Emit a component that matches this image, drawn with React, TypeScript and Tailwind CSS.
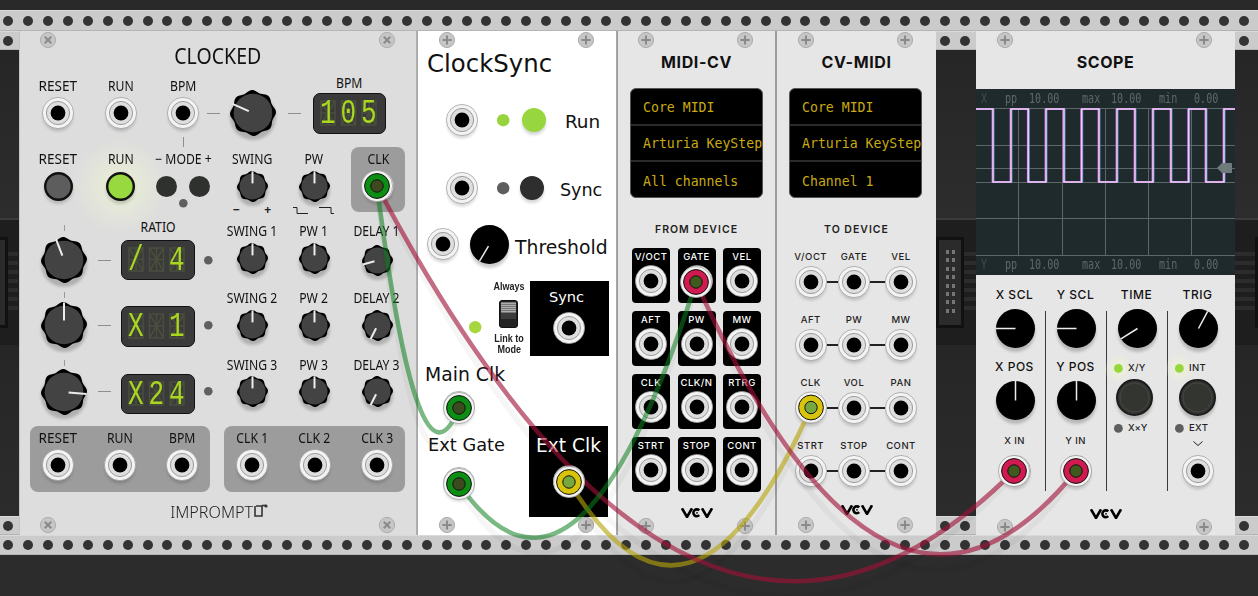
import { ReactNode } from "react";

function Rail({ className = "" }: { className?: string }) {
  return (
    <div className={"flex items-center shrink-0 overflow-hidden bg-[#cbcbcb] border-t border-t-[#d9d9d9] border-b border-b-[#b4b4b4] " + className}>
      <div className="flex -ml-[2px]">
        {Array.from({ length: 64 }).map((_, i) => (
          <div key={i} className="w-[19.95px] shrink-0 flex justify-center">
            <div className="w-[10px] h-[10px] rounded-full bg-[#333333]" />
          </div>
        ))}
      </div>
    </div>
  );
}

function Art({ r, className = "", children }: { r: number; className?: string; children: ReactNode }) {
  return (
    <svg width={2 * r} height={2 * r} viewBox={`${-r} ${-r} ${2 * r} ${2 * r}`} className={"block shrink-0 overflow-visible " + className}>
      {children}
    </svg>
  );
}
function Jack({ className = "" }: { className?: string }) {
  return (
    <Art r={16} className={className}>
      <circle cy={3.5} r={15} fill="#000" opacity={0.16} filter="url(#blur2)" />
      <circle r={15.6} fill="#f3f3f3" stroke="#999" strokeWidth={0.7} />
      <circle r={11.6} fill="#dedede" stroke="#888" strokeWidth={0.8} />
      <circle r={7.4} fill="#000" />
    </Art>
  );
}
function Knob({ r, a, className = "" }: { r: number; a: number; className?: string }) {
  const pts: string[] = [];
  for (let i = 0; i < 96; i++) {
    const t = (i / 96) * Math.PI * 2;
    const R = r * (0.95 + 0.05 * Math.cos(8 * t + Math.PI / 8));
    pts.push(`${(R * Math.sin(t)).toFixed(2)},${(-R * Math.cos(t)).toFixed(2)}`);
  }
  const s = Math.sin((a * Math.PI) / 180);
  const c = -Math.cos((a * Math.PI) / 180);
  return (
    <Art r={r} className={className}>
      <circle cy={4} r={r} fill="#000" opacity={0.2} filter="url(#blur2)" />
      <polygon points={pts.join(" ")} fill="#000" />
      <circle r={r * 0.84} fill="#434343" />
      <line x1={s * r * 0.98} y1={c * r * 0.98} x2={s * r * 0.2} y2={c * r * 0.2} stroke="#ececec" strokeWidth={2} />
    </Art>
  );
}
function PlainKnob({ a, inner = 0, className = "" }: { a: number; inner?: number; className?: string }) {
  const r = 19.5;
  const s = Math.sin((a * Math.PI) / 180);
  const c = -Math.cos((a * Math.PI) / 180);
  return (
    <Art r={r} className={className}>
      <circle cy={4} r={r} fill="#000" opacity={0.2} filter="url(#blur2)" />
      <circle r={r} fill="#000" />
      <line x1={s * r} y1={c * r} x2={s * inner} y2={c * inner} stroke="#ececec" strokeWidth={1.5} />
    </Art>
  );
}
function Led({ r, c, glow = false, shadow = false, stroke, className = "" }: { r: number; c: string; glow?: boolean; shadow?: boolean; stroke?: boolean; className?: string }) {
  return (
    <Art r={r} className={className}>
      {glow && <circle r={r * 3.4} fill="url(#glow)" />}
      {shadow && <circle cy={3} r={r} fill="#000" opacity={0.16} filter="url(#blur2)" />}
      <circle r={stroke ? r - 1.2 : r} fill={c} stroke={stroke ? "#111" : "none"} strokeWidth={stroke ? 2.4 : 0} />
    </Art>
  );
}
function Screw({ cross = false }: { cross?: boolean }) {
  return (
    <Art r={8}>
      <circle r={7.6} fill="#c6c6c6" stroke="#adadad" strokeWidth={1} />
      <g stroke="#8a8a8a" strokeWidth={2} transform={cross ? "rotate(45)" : undefined}>
        <line x1={-4.6} x2={4.6} />
        <line y1={-4.6} y2={4.6} />
      </g>
    </Art>
  );
}
function Screws({ className, cross = false }: { className: string; cross?: boolean }) {
  return (
    <div className={"flex justify-between shrink-0 " + className}>
      <Screw cross={cross} />
      <Screw cross={cross} />
    </div>
  );
}
function VcvLogo({ className = "" }: { className?: string }) {
  return (
    <svg width={32} height={10} viewBox="0 0 32 10" className={"block shrink-0 " + className} fill="none" stroke="#000" strokeWidth={2.6}>
      <polyline points="1,0.3 6,9 11,0.3" />
      <path d="M18.2 2.4 A3.4 3.4 0 1 0 18.2 7.2" />
      <circle cx={16} cy={4.8} r={0.9} fill="#000" stroke="none" />
      <polyline points="21,0.3 26,9 31,0.3" />
    </svg>
  );
}

function Seg({ w, h, text, className = "" }: { w: number; h: number; text: string; className?: string }) {
  return (
    <div className={"relative shrink-0 flex items-center pl-[6px] rounded-[7px] bg-[#3a3a3a] border border-[#111] overflow-hidden " + className} style={{ width: w, height: h }}>
      <svg width={w - 2} height={h - 2} className="absolute left-0 top-0" stroke="#4a4e3e" strokeWidth={1.5} fill="none">
        {[0, 1, 2].map((i) => {
          const l = 7 + i * 20.5;
          const t = 7;
          const cw = 14;
          const ch = h - 17;
          return (
            <g key={i}>
              <rect x={l} y={t} width={cw} height={ch} />
              <line x1={l} y1={t + ch / 2} x2={l + cw} y2={t + ch / 2} />
              <line x1={l + cw / 2} y1={t} x2={l + cw / 2} y2={t + ch} />
              <line x1={l} y1={t} x2={l + cw} y2={t + ch} />
              <line x1={l + cw} y1={t} x2={l} y2={t + ch} />
            </g>
          );
        })}
      </svg>
      <span className="relative font-['Liberation_Mono'] text-[26px] tracking-[4.9px] leading-[30px] text-[#a9d61e] whitespace-pre scale-y-[1.38]">{text}</span>
    </div>
  );
}

const lab = "font-['Noto_Sans'] text-[14px] leading-none whitespace-nowrap text-[#111] scale-x-[0.87]";
const labw = "font-['Noto_Sans'] text-[14px] leading-none whitespace-nowrap text-[#111] scale-x-[0.97]";
const line = "h-[1px] w-[13px] bg-[#8f8f8f]";

function S({ w, label, cls = lab, className = "", foot, children }: { w: number; label?: ReactNode; cls?: string; className?: string; foot?: ReactNode; children?: ReactNode }) {
  return (
    <div className={"flex flex-col items-center shrink-0 " + className} style={{ width: w }}>
      <div className={"h-[16px] flex items-center justify-center " + cls}>{label}</div>
      <div className="mt-[3px] h-[32px] w-full flex items-center justify-center">{children}</div>
      {foot}
    </div>
  );
}

function KnobRow({ tick, a, seg, swing, pw, delay, da, className, ratio, kn = "", dn = "" }: { tick: string; a: number; seg: ReactNode; swing: string; pw: string; delay: string; da: number; className: string; ratio?: string; kn?: string; dn?: string }) {
  return (
    <div className={"flex items-start ml-[21px] shrink-0 " + className}>
      <S w={46} label={<div className={"w-[1px] h-[6px] bg-[#8f8f8f] " + tick} />}><Knob r={23} a={a} className={kn} /></S>
      <S w={13} className="ml-[11px]"><div className={line + " " + kn} /></S>
      <S w={74} className="ml-[10px]" label={ratio} cls={lab + " -translate-y-[4px]"}>{seg}</S>
      <S w={9} className="ml-[9px]"><Led r={4.3} c="#5f5f5f" className={kn} /></S>
      <S w={50} className="ml-[14px]" label={swing}><Knob r={15.5} a={0} /></S>
      <S w={50} className="ml-[12px]" label={pw}><Knob r={15.5} a={0} /></S>
      <S w={50} className="ml-[13px]" label={delay}><Knob r={15.5} a={da} className={dn} /></S>
    </div>
  );
}

function Clocked() {
  const glyph = "font-['Noto_Sans'] font-bold text-[12px] leading-none text-[#222]";
  return (
    <div className="shrink-0 w-[398px] h-full flex flex-col bg-[#dddddd] bg-[radial-gradient(circle_48px_at_100px_155px,rgba(238,248,200,0.7),rgba(238,246,212,0.35)_55%,transparent)] border-l border-l-[#c4c4c4] border-r border-r-[#b0b0b0]">
      <Screws cross className="mt-[1px] ml-[20px] w-[355px]" />
      <div className="-mt-[3.5px] h-[24px] flex items-center justify-center shrink-0">
        <span className="font-['Noto_Sans'] text-[21px] leading-none text-[#111] scale-x-[0.93]">CLOCKED</span>
      </div>

      <div className="mt-[9.5px] ml-[7px] flex items-start shrink-0">
        <S w={62} label="RESET" cls={labw}><Jack /></S>
        <S w={63} label="RUN"><Jack /></S>
        <S w={38} label="BPM" className="ml-[12px]"><Jack /></S>
        <S w={13} className="ml-[5px]"><div className={line} /></S>
        <S w={46} className="ml-[10px]"><Knob r={23} a={-66} /></S>
        <S w={13} className="ml-[12px]"><div className={line} /></S>
        <S w={73} className="ml-[12px]" label="BPM" cls={lab + " -translate-y-[3px]"}><Seg w={73} h={41} text="105" /></S>
      </div>
      <div className="mt-[8px] h-[10px] w-[1px] ml-[163px] bg-[#8f8f8f] shrink-0" />

      <div className="ml-[7px] flex items-start shrink-0">
        <S w={62} className="pt-[4px]" label="RESET" cls={labw}><Led r={14.5} c="#5d5d5d" shadow stroke /></S>
        <S w={63} className="pt-[4px]" label="RUN"><Led r={14.5} c="#98d93f" shadow stroke /></S>
        <S w={62} className="pt-[4px]" label="− MODE +"
          foot={<Led r={4.3} c="#5f5f5f" className="-mt-[3px]" />}>
          <div className="flex gap-[11.5px]">
            <Led r={10.5} c="#2f312f" />
            <Led r={10.5} c="#2f312f" />
          </div>
        </S>
        <S w={50} className="pt-[4px] ml-[13px]" label="SWING"
          foot={<div className="mt-[3px] h-[10px] w-[38px] flex justify-between items-center"><span className={glyph}>−</span><span className={glyph}>+</span></div>}>
          <Knob r={15.5} a={0} />
        </S>
        <S w={50} className="pt-[4px] ml-[12px]" label="PW"
          foot={
            <svg width={44} height={10} className="block mt-[3px] shrink-0" fill="none" stroke="#222" strokeWidth={1}>
              <polyline points="1,2.5 5,2.5 5,8.5 16,8.5" />
              <polyline points="27,2.5 39,2.5 39,8.5 42,8.5" />
            </svg>
          }>
          <Knob r={15.5} a={0} />
        </S>
        <S w={54} className="pt-[4px] ml-[12px] h-[65px] rounded-[8px] bg-[#9c9c9c]" label="CLK"><Jack /></S>
      </div>

      <KnobRow className="mt-[8px]" tick="-translate-y-[3px]" a={-21} kn="translate-y-[2px]" ratio="RATIO"
        seg={<Seg w={74} h={40} text="/ 4" className="translate-y-[2px]" />}
        swing="SWING 1" pw="PW 1" delay="DELAY 1" da={-105} dn="translate-y-[2px]" />
      <KnobRow className="mt-[16px]" tick="-translate-y-[3px]" a={0}
        seg={<Seg w={74} h={41} text="X 1" className="translate-y-[1px]" />}
        swing="SWING 2" pw="PW 2" delay="DELAY 2" da={-153} />
      <KnobRow className="mt-[15.5px]" tick="-translate-y-[2px]" a={95}
        seg={<Seg w={74} h={40} text="X24" className="translate-y-[2px]" />}
        swing="SWING 3" pw="PW 3" delay="DELAY 3" da={-153} />

      <div className="mt-[18.5px] ml-[10px] flex gap-[14px] shrink-0">
        <div className="w-[180px] h-[66px] pt-[4px] px-[3px] flex justify-between rounded-[8px] bg-[#9c9c9c]">
          <S w={50} label="RESET" cls={labw}><Jack /></S>
          <S w={50} label="RUN"><Jack /></S>
          <S w={50} label="BPM"><Jack /></S>
        </div>
        <div className="w-[181px] h-[66px] pt-[4px] px-[3px] flex justify-between rounded-[8px] bg-[#9c9c9c]">
          <S w={50} label="CLK 1"><Jack /></S>
          <S w={50} label="CLK 2"><Jack /></S>
          <S w={50} label="CLK 3"><Jack /></S>
        </div>
      </div>

      <div className="mt-[13px] h-[12px] flex items-center justify-center shrink-0">
        <span className="font-['Noto_Sans'] text-[17px] leading-none font-light text-[#222] scale-x-[0.95]">IMPROMPT</span>
        <svg width={14} height={13} className="block -ml-[2px] -mt-[2px] shrink-0" fill="none" stroke="#333" strokeWidth={1.6}>
          <path d="M1 2 V12 H8 V2 H2" />
          <path d="M8 1.5 H12" />
          <circle cx={12} cy={2} r={1.6} fill="#333" stroke="none" />
        </svg>
      </div>
      <Screws cross className="mt-auto mb-[2px] ml-[20px] w-[355px]" />
    </div>
  );
}

const cs = "font-['DejaVu_Sans'] leading-none whitespace-nowrap text-[#111] pt-[2px]";
const small = "font-['Liberation_Sans'] font-bold text-[11px] leading-[11px] whitespace-nowrap text-[#222] scale-x-[0.82]";

function ClockSync() {
  return (
    <div className="shrink-0 w-[200px] h-full flex flex-col bg-white border-x border-x-[#a8a8a8]">
      <Screws className="mt-[1px] ml-[21px] w-[155px]" />
      <div className={"mt-[1px] ml-[9px] h-[30px] flex items-center text-[24.4px] " + cs}>ClockSync</div>

      <div className="mt-[26px] ml-[28px] h-[32px] flex items-center shrink-0">
        <Jack />
        <Led r={6.2} c="#97d43c" className="ml-[19px]" />
        <Led r={12} c="#98d640" shadow className="ml-[12.5px]" />
        <span className={"ml-[19px] mt-[2px] text-[18.4px] " + cs}>Run</span>
      </div>
      <div className="mt-[36px] ml-[28px] h-[32px] flex items-center shrink-0">
        <Jack />
        <Led r={6.2} c="#5e5e5e" className="ml-[19px]" />
        <Led r={12} c="#2e2e2e" shadow className="ml-[11px]" />
        <span className={"ml-[15.5px] mt-[4px] text-[17.6px] " + cs}>Sync</span>
      </div>
      <div className="mt-[24px] ml-[9px] h-[32px] flex items-center shrink-0">
        <Jack />
        <PlainKnob a={-149} inner={2} className="ml-[10.5px]" />
        <span className={"ml-[6.5px] mt-[6px] text-[18.8px] " + cs}>Threshold</span>
      </div>

      <div className="mt-[21px] h-[75px] flex items-start shrink-0">
        <Led r={6.2} c="#a7d63e" className="ml-[50.8px] mt-[39.8px]" />
        <div className="ml-[7.8px] w-[40px] flex flex-col items-center shrink-0">
          <span className={"h-[10px] " + small}>Always</span>
          <svg width={19} height={28} className="block mt-[9px] shrink-0">
            <rect x={0.5} y={0.5} width={18} height={27} rx={2.5} fill="#222" stroke="#111" />
            <rect x={2} y={2} width={15} height={11} fill="#777" />
            {[3.5, 5.5, 7.5, 9.5, 11.5].map((v) => <line key={v} x1={2} x2={17} y1={v} y2={v} stroke="#bbb" strokeWidth={0.8} />)}
            <rect x={2} y={13} width={15} height={6} fill="#3c3c3c" />
          </svg>
          <span className={"mt-[5px] h-[11px] " + small}>Link to</span>
          <span className={"h-[11px] " + small}>Mode</span>
        </div>
        <div className="ml-[1px] w-[79px] h-[75px] bg-black flex flex-col items-center shrink-0">
          <span className="mt-[8px] pr-[6px] h-[16px] flex items-center font-['DejaVu_Sans'] text-[14.6px] leading-none text-white">Sync</span>
          <Jack className="mt-[7px]" />
        </div>
      </div>

      <div className="mt-[8px] flex items-start shrink-0">
        <div className="w-[111px] flex flex-col shrink-0">
          <span className={"ml-[7px] h-[20px] flex items-center text-[18.8px] " + cs}>Main Clk</span>
          <Jack className="mt-[7px] ml-[25px]" />
          <span className={"mt-[11px] ml-[10px] h-[20px] flex items-center text-[17.8px] " + cs}>Ext Gate</span>
          <Jack className="mt-[13px] ml-[25px]" />
        </div>
        <div className="mt-[62px] w-[79px] h-[91px] bg-black flex flex-col items-center shrink-0">
          <span className="mt-[9px] h-[20px] pt-[2px] flex items-center font-['DejaVu_Sans'] text-[18.6px] leading-none text-white">Ext Clk</span>
          <Jack className="mt-[10px]" />
        </div>
      </div>
      <Screws className="mt-auto mb-[2px] ml-[21px] w-[155px]" />
    </div>
  );
}

const midiTitle = "font-['Inter'] font-bold text-[16px] tracking-[0.6px] leading-none text-[#111]";
const midiHead = "font-['Inter'] font-semibold text-[10.5px] tracking-[1px] leading-none text-[#222]";

function Title({ text, className }: { text: string; className: string }) {
  return <div className={"h-[20px] flex items-center justify-center shrink-0 " + className}><span className={midiTitle}>{text}</span></div>;
}

function MidiDisplay({ lines }: { lines: string[] }) {
  return (
    <div className="mt-[16px] ml-[12px] w-[133px] h-[110px] shrink-0 bg-black rounded-[6px] border border-[#555] overflow-hidden flex flex-col">
      {lines.map((l, i) => (
        <div key={l} className={"h-[36.5px] shrink-0 flex items-center pt-[3px] pl-[12px] whitespace-nowrap font-['DejaVu_Sans_Mono'] text-[13.2px] text-[#c9aa10] " + (i < 2 ? "border-b-2 border-b-[#2b2b2b]" : "")}>{l}</div>
      ))}
    </div>
  );
}

function MidiCv() {
  const labels = ["V/OCT", "GATE", "VEL", "AFT", "PW", "MW", "CLK", "CLK/N", "RTRG", "STRT", "STOP", "CONT"];
  return (
    <div className="shrink-0 w-[160px] h-full flex flex-col bg-[#e6e6e6] border-l border-l-[#9c9c9c] border-r-2 border-r-[#9c9c9c]">
      <Screws className="mt-[1px] ml-[20px] w-[115px]" />
      <Title text="MIDI-CV" className="mt-[4px]" />
      <MidiDisplay lines={["Core MIDI", "Arturia KeyStep", "All channels"]} />
      <div className="mt-[26px] h-[12px] flex items-center justify-center shrink-0"><span className={midiHead}>FROM DEVICE</span></div>
      <div className="mt-[12px] ml-[14px] w-[129px] shrink-0 grid grid-cols-[38px_38px_38px] justify-between grid-rows-[55px_55px_55px_55px] gap-y-[8px]">
        {labels.map((l) => (
          <div key={l} className="bg-black rounded-[4px] flex flex-col items-center">
            <span className="h-[18px] pt-[4px] leading-[10px] font-['Inter'] font-medium text-[9.5px] tracking-[0.5px] text-white">{l}</span>
            <Jack className="-mt-[1px]" />
          </div>
        ))}
      </div>
      <div className="mt-[16px] flex justify-center shrink-0"><VcvLogo /></div>
      <Screws className="mt-auto mb-[2px] ml-[20px] w-[115px]" />
    </div>
  );
}

function CvMidi() {
  const rows = [["V/OCT", "GATE", "VEL"], ["AFT", "PW", "MW"], ["CLK", "VOL", "PAN"], ["STRT", "STOP", "CONT"]];
  const cell = (l: string) => (
    <div className="w-[32px] flex flex-col items-center shrink-0">
      <span className="h-[14px] flex items-center pt-[1px] whitespace-nowrap font-['Inter'] font-medium text-[9.5px] leading-none tracking-[0.5px] text-[#222]">{l}</span>
      <Jack className="mt-[2px]" />
    </div>
  );
  return (
    <div className="shrink-0 w-[159px] h-full flex flex-col bg-[#e6e6e6]">
      <Screws className="mt-[1px] ml-[21px] w-[115px]" />
      <Title text="CV-MIDI" className="mt-[4px]" />
      <MidiDisplay lines={["Core MIDI", "Arturia KeyStep", "Channel 1"]} />
      <div className="mt-[26px] h-[12px] flex items-center justify-center shrink-0"><span className={midiHead}>TO DEVICE</span></div>
      <div className="mt-[13.5px] ml-[17.7px] flex flex-col gap-y-[15px] shrink-0">
        {rows.map((r) => (
          <div key={r[0]} className="flex items-end">
            {cell(r[0])}
            <div className="w-[11.3px] h-[1.5px] mb-[15px] bg-[#222]" />
            {cell(r[1])}
            <div className="w-[15px] h-[1.5px] mb-[15px] bg-[#222]" />
            {cell(r[2])}
          </div>
        ))}
      </div>
      <div className="mt-[18.5px] flex justify-center shrink-0"><VcvLogo /></div>
      <Screws className="mt-auto mb-[2px] ml-[21px] w-[115px]" />
    </div>
  );
}

const scopeLab = "h-[14px] flex items-center -translate-y-[1px] whitespace-nowrap font-['Inter'] font-medium text-[12px] leading-none tracking-[0.5px] text-[#111]";
const scopeSm = "whitespace-nowrap font-['Inter'] font-medium text-[9.5px] leading-none tracking-[0.4px] text-[#222]";

function Readout({ name }: { name: string }) {
  const vals = ["pp", "10.00", "max", "10.00", "min", "0.00"];
  const cls = ["w-[24px]", "w-[53px]", "w-[29px]", "w-[48px]", "w-[35px]", "w-[30px]"];
  const t = "origin-left scale-x-[0.72] font-['DejaVu_Sans_Mono'] text-[14px] leading-none whitespace-nowrap shrink-0 ";
  return (
    <div className="relative h-[18px] pl-[5px] flex items-center shrink-0">
      <span className={t + "w-[24px] text-[#414d4f]"}>{name}</span>
      {vals.map((v, i) => <span key={i} className={t + cls[i] + " text-[#5d686a]"}>{v}</span>)}
    </div>
  );
}

function LedRow({ c, text, className = "", glow = false }: { c: string; text: string; className?: string; glow?: boolean }) {
  return (
    <div className={"w-full pl-[7.6px] h-[14px] flex items-center shrink-0 " + className}>
      <Led r={4.4} c={c} glow={glow} />
      <span className={"ml-[5px] " + scopeSm}>{text}</span>
    </div>
  );
}
function Push({ className = "" }: { className?: string }) {
  return (
    <Art r={18.5} className={className}>
      <circle cy={4} r={18} fill="#000" opacity={0.2} filter="url(#blur2)" />
      <circle r={17.5} fill="#333531" stroke="#1c1c1c" strokeWidth={2} />
      <circle r={14.5} fill="none" stroke="#454744" strokeWidth={1} />
    </Art>
  );
}

function Scope() {
  const falls = [993, 1028.3, 1064, 1099, 1135, 1171, 1206];
  const rises = [1011, 1046, 1081.7, 1117, 1153, 1188.7, 1224];
  let d = "M970 109";
  falls.forEach((f, i) => {
    d += ` H${f} V182 H${rises[i]} V109`;
  });
  d += " H1240";
  const sep = <div className="mt-[22px] h-[180px] w-[1px] bg-[#3a3a3a] shrink-0" />;
  const col = "w-[60px] flex flex-col items-center shrink-0";
  return (
    <div className="shrink-0 w-[259px] h-full flex flex-col bg-[#e6e6e6]">
      <Screws className="mt-[1px] ml-[21px] w-[215px]" />
      <Title text="SCOPE" className="mt-[4px]" />
      <div className="relative mt-[17px] h-[186px] shrink-0 bg-[#1f2a2c] flex flex-col justify-between pb-[2px]">
        <svg width={259} height={186} viewBox="976 89 259 186" className="absolute left-0 top-0">
          <g stroke="#5d6668" strokeWidth={1}>
            {[108.5, 145.5, 168.5, 182.5, 218.5, 255.5].map((y) => <line key={y} x1={976} x2={1235} y1={y} y2={y} />)}
            {[1018.5, 1062.5, 1105.5, 1148.5, 1191.5].map((x) => <line key={x} x1={x} x2={x} y1={109} y2={255} />)}
          </g>
          <path d={d} fill="none" stroke="#4fa7e6" strokeWidth={0.8} transform="translate(1 0)" />
          <path d={d} fill="none" stroke="#d070f5" strokeWidth={1} transform="translate(-0.9 0)" />
          <path d={d} fill="none" stroke="#f8c8fb" strokeWidth={1.6} />
          <polygon points="1217,168 1222,163 1232,163 1232,173 1222,173" fill="#6f7a7c" />
        </svg>
        <Readout name="X" />
        <Readout name="Y" />
      </div>

      <div className="mt-[14px] ml-[8.5px] h-[201px] flex items-start shrink-0">
        <div className={col}>
          <span className={scopeLab}>X SCL</span>
          <PlainKnob a={-90} className="mt-[5.5px] ml-[1px]" />
          <span className={"mt-[13.5px] " + scopeLab}>X POS</span>
          <PlainKnob a={0} className="mt-[5.5px] ml-[1px]" />
          <span className={"mt-[15.5px] h-[12px] flex items-center " + scopeSm}>X IN</span>
          <Jack className="mt-[8px]" />
        </div>
        {sep}
        <div className={col}>
          <span className={scopeLab}>Y SCL</span>
          <PlainKnob a={-90} className="mt-[5.5px] ml-[1px]" />
          <span className={"mt-[13.5px] " + scopeLab}>Y POS</span>
          <PlainKnob a={0} className="mt-[5.5px] ml-[1px]" />
          <span className={"mt-[15.5px] h-[12px] flex items-center " + scopeSm}>Y IN</span>
          <Jack className="mt-[8px]" />
        </div>
        {sep}
        <div className={col}>
          <span className={scopeLab}>TIME</span>
          <PlainKnob a={-122} className="mt-[5.5px] ml-[1px]" />
          <LedRow c="#98d63d" text="X/Y" glow className="mt-[13.5px]" />
          <Push className="mt-[3.5px] mr-[4px]" />
          <LedRow c="#5e5e5e" text="X×Y" className="mt-[5.5px]" />
        </div>
        {sep}
        <div className={col}>
          <span className={scopeLab}>TRIG</span>
          <PlainKnob a={28} className="mt-[5.5px] ml-[1px]" />
          <LedRow c="#98d63d" text="INT" glow className="mt-[13.5px]" />
          <Push className="mt-[3.5px]" />
          <LedRow c="#5e5e5e" text="EXT" className="mt-[5.5px]" />
          <svg width={10} height={6} className="block mt-[6px] shrink-0" fill="none" stroke="#222" strokeWidth={1}><polyline points="0.5,0.5 5,4.5 9.5,0.5" /></svg>
          <Jack className="mt-[8px]" />
        </div>
      </div>
      <div className="mt-[19px] flex justify-center shrink-0"><VcvLogo /></div>
      <Screws className="mt-auto mb-[2px] ml-[21px] w-[215px]" />
    </div>
  );
}

const stripes = "h-[63px] mt-[15px] bg-[repeating-linear-gradient(to_bottom,#2c2c2c_0_4px,transparent_4px_9px)]";

function Backdrop() {
  return (
    <div className="absolute inset-0 flex flex-col">
      <Rail className="h-[19px]" />
      <div className="h-[168px] shrink-0 bg-gradient-to-b from-[#262626] to-[#2d2d2d]" />
      <div className="h-[2px] shrink-0 bg-[#3b3b3b]" />
      <div className="h-[125px] shrink-0 bg-[#1e1e1e] flex pt-[17px]">
        <div className="w-[8px] h-[91px] bg-[#111] py-[3px] pr-[3px] shrink-0"><div className="h-full bg-[#2b2b2b]" /></div>
        <div className={"w-[10px] shrink-0 " + stripes} />
        <div className="w-[918px] shrink-0" />
        <div className="w-[28px] h-[91px] bg-[#111] p-[3px] shrink-0">
          <div className="w-full h-full bg-[#2b2b2b] grid grid-cols-2 gap-y-[4.4px] pt-[10px] px-[5px] justify-items-center content-start">
            {Array.from({ length: 16 }).map((_, i) => <div key={i} className="w-[3px] h-[4px] bg-[#757575]" />)}
          </div>
        </div>
        <div className={"w-[12px] shrink-0 " + stripes} />
        <div className="w-[259px] shrink-0" />
        <div className={"w-[20px] shrink-0 " + stripes} />
        <div className="w-[3px] h-[91px] bg-[#111] shrink-0" />
      </div>
      <div className="flex-1 bg-gradient-to-b from-[#262626] to-[#2c2c2c]" />
      <Rail className="h-[19px]" />
    </div>
  );
}

type Wire = { a: [number, number]; b: [number, number]; c: number; color: string };
const wires: Wire[] = [
  { a: [569, 482], b: [811, 407.5], c: 680, color: "#b5a50c" },
  { a: [377, 186], b: [1014, 471], c: 790, color: "#9e1238" },
  { a: [696, 282], b: [1076, 471], c: 705, color: "#9e1238" },
  { a: [459, 484], b: [696, 282], c: 655, color: "#0f7f1f" },
  { a: [377, 186], b: [459, 408], c: 510, color: "#0f7f1f" },
];
const plugs: [number, number, string, string][] = [
  [377, 186, "#0c8e15", "#3d4a20"],
  [459, 408, "#0c8e15", "#3d4a20"],
  [459, 484, "#0c8e15", "#3d4a20"],
  [569, 482, "#d9c40c", "#76a83f"],
  [696, 282, "#d01a50", "#3f5a1c"],
  [811, 407.5, "#d9c40c", "#76a83f"],
  [1014, 471, "#d01a50", "#3f5a1c"],
  [1076, 471, "#d01a50", "#3f5a1c"],
];

function Cables() {
  return (
    <svg width={1258} height={596} className="absolute left-0 top-0 pointer-events-none">
      {wires.map((w, i) => {
        const mx = (w.a[0] + w.b[0]) / 2;
        return <path key={i} d={`M${w.a[0]} ${w.a[1] + 4} Q${mx} ${w.c + 30} ${w.b[0]} ${w.b[1] + 4}`} fill="none" stroke="#000" strokeOpacity={0.035} strokeWidth={6} />;
      })}
      {wires.map((w, i) => {
        const mx = (w.a[0] + w.b[0]) / 2;
        return <path key={i} d={`M${w.a[0]} ${w.a[1]} Q${mx} ${w.c} ${w.b[0]} ${w.b[1]}`} fill="none" stroke={w.color} strokeOpacity={i > 2 ? 0.55 : 0.62} strokeWidth={4.6} />;
      })}
      {plugs.map(([x, y, c, n], i) => (
        <g key={i} transform={`translate(${x} ${y})`}>
          <circle r={15.6} fill="#f3f3f3" stroke="#999" strokeWidth={0.7} />
          <circle r={12.4} fill={c} stroke="#111" strokeWidth={1} />
          <circle r={6.2} fill={n} stroke="#111" strokeWidth={1} />
        </g>
      ))}
    </svg>
  );
}

export default function App() {
  return (
    <div className="relative w-[1258px] h-[596px] overflow-hidden bg-[#2c2c2c] flex flex-col">
      <svg width={0} height={0} className="absolute">
        <defs>
          <filter id="blur2" x="-30%" y="-30%" width="160%" height="160%"><feGaussianBlur stdDeviation={1.6} /></filter>
          <radialGradient id="glow">
            <stop offset="0%" stopColor="#eef8c8" stopOpacity={0.75} />
            <stop offset="55%" stopColor="#eef6d4" stopOpacity={0.4} />
            <stop offset="100%" stopColor="#eef6d4" stopOpacity={0} />
          </radialGradient>
        </defs>
      </svg>
      <div className="h-[10px] shrink-0 bg-[#292929]" />
      <Rail className="h-[21px]" />
      <div className="relative h-[504px] shrink-0">
        <Backdrop />
        <div className="relative flex h-full pl-[19px]">
          <Clocked />
          <ClockSync />
          <MidiCv />
          <CvMidi />
          <div className="w-[40px] shrink-0" />
          <Scope />
        </div>
      </div>
      <Rail className="h-[20px]" />
      <Cables />
    </div>
  );
}
